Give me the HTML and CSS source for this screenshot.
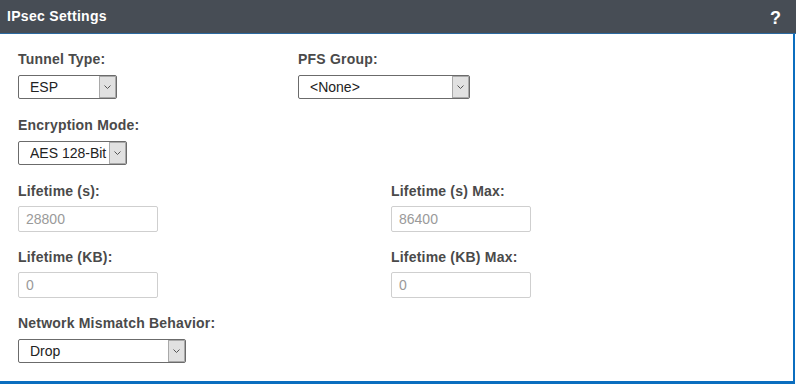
FILE: index.html
```html
<!DOCTYPE html>
<html>
<head>
    <link rel="stylesheet" href="styles.css">
</head>
<body>
    <div class="panel">
        <div class="panel-header">
            <span class="panel-title">IPsec Settings</span>
            <span class="help">?</span>
        </div>

        <div class="panel-body">
            <div class="row">
                <div class="field col-narrow">
                    <label>Tunnel Type:</label>
                    <div class="select-wrap sel-tunnel">
                        <select><option>ESP</option></select>
                        <span class="arrow"><svg width="7" height="4" viewBox="0 0 7 4"><path d="M0.5 0.5 L3.5 3.5 L6.5 0.5" fill="none" stroke="#555" stroke-width="1"/></svg></span>
                    </div>
                </div>
                <div class="field">
                    <label>PFS Group:</label>
                    <div class="select-wrap sel-pfs">
                        <select><option>&lt;None&gt;</option></select>
                        <span class="arrow"><svg width="7" height="4" viewBox="0 0 7 4"><path d="M0.5 0.5 L3.5 3.5 L6.5 0.5" fill="none" stroke="#555" stroke-width="1"/></svg></span>
                    </div>
                </div>
            </div>

            <div class="row">
                <div class="field">
                    <label>Encryption Mode:</label>
                    <div class="select-wrap sel-enc">
                        <select><option>AES 128-Bit</option></select>
                        <span class="arrow"><svg width="7" height="4" viewBox="0 0 7 4"><path d="M0.5 0.5 L3.5 3.5 L6.5 0.5" fill="none" stroke="#555" stroke-width="1"/></svg></span>
                    </div>
                </div>
            </div>

            <div class="row row-input">
                <div class="field col-wide">
                    <label>Lifetime (s):</label>
                    <input type="text" placeholder="28800">
                </div>
                <div class="field">
                    <label>Lifetime (s) Max:</label>
                    <input type="text" placeholder="86400">
                </div>
            </div>

            <div class="row row-input">
                <div class="field col-wide">
                    <label>Lifetime (KB):</label>
                    <input type="text" placeholder="0">
                </div>
                <div class="field">
                    <label>Lifetime (KB) Max:</label>
                    <input type="text" placeholder="0">
                </div>
            </div>

            <div class="row last">
                <div class="field">
                    <label>Network Mismatch Behavior:</label>
                    <div class="select-wrap sel-net">
                        <select><option>Drop</option></select>
                        <span class="arrow"><svg width="7" height="4" viewBox="0 0 7 4"><path d="M0.5 0.5 L3.5 3.5 L6.5 0.5" fill="none" stroke="#555" stroke-width="1"/></svg></span>
                    </div>
                </div>
            </div>
        </div>
    </div>
</body>
</html>
```

FILE: styles.css
```css
body {
    margin: 0;
    background: #fff;
    font-family: "Liberation Sans", Arial, sans-serif;
}
.panel {
    width: 796px;
}
.panel-header {
    height: 33px;
    background: #474d55;
    border-bottom: 1px solid #2c6aa0;
    display: flex;
    align-items: center;
    justify-content: space-between;
    padding: 0 15px 0 7px;
    color: #fff;
    font-weight: bold;
}
.panel-title {
    font-size: 14px;
    letter-spacing: 0.3px;
    margin-top: -1px;
}
.help {
    font-size: 18px;
    margin-top: 4px;
}
.panel-body {
    width: 795px;
    box-sizing: border-box;
    border-right: 2px solid #0b6ebf;
    border-bottom: 3px solid #0b6ebf;
    padding: 17px 0 18px 18px;
}
.row {
    display: flex;
    margin-bottom: 18px;
}
.row-input {
    margin-bottom: 17px;
}
.row.last {
    margin-bottom: 0;
}
.col-narrow {
    width: 280px;
}
.col-wide {
    width: 373px;
}
.field label {
    display: block;
    font-size: 14px;
    line-height: 16px;
    font-weight: bold;
    letter-spacing: 0.2px;
    color: #4a4a4a;
    margin-bottom: 8px;
}
.row-input .field label {
    margin-bottom: 7px;
}
.select-wrap {
    position: relative;
    height: 24px;
}
.select-wrap select {
    appearance: none;
    -webkit-appearance: none;
    width: 100%;
    height: 24px;
    box-sizing: border-box;
    border: 1px solid #6b6b6b;
    border-radius: 2px;
    background: #fff;
    padding: 0 0 0 11px;
    font-family: "Liberation Sans", Arial, sans-serif;
    font-size: 14px;
    color: #222;
    outline: none;
}
.arrow {
    position: absolute;
    top: 1px;
    right: 1px;
    bottom: 1px;
    width: 15px;
    background: #e1e1e1;
    border: 1px solid #a9a9a9;
    display: flex;
    align-items: center;
    justify-content: center;
    pointer-events: none;
}
.sel-tunnel {
    width: 99px;
}
.sel-pfs {
    width: 172px;
}
.sel-enc {
    width: 109px;
}
.sel-net {
    width: 168px;
}
.field input {
    width: 140px;
    height: 26px;
    box-sizing: border-box;
    border: 1px solid #cfcfcf;
    border-radius: 2px;
    padding: 0 7px;
    font-family: "Liberation Sans", Arial, sans-serif;
    font-size: 14px;
    color: #333;
    outline: none;
}
.field input::placeholder {
    color: #9a9a9a;
}
```
